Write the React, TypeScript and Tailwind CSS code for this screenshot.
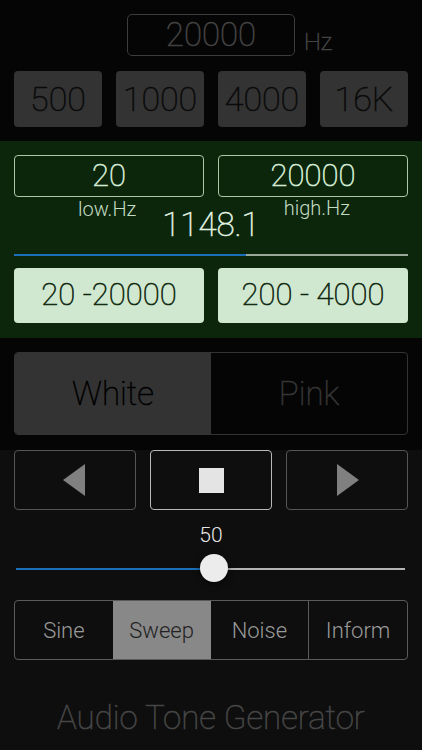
import React from 'react';

const font = { fontFamily: 'Roboto, "Liberation Sans", sans-serif' };

// Roboto Thin is a bit lighter than the light face in the shot, so thicken it a touch
const thin = 'font-thin [-webkit-text-stroke-width:0.6px]';

function Presets() {
  const items = ['500', '1000', '4000', '16K'];
  return (
    <div className="mt-[15px] grid grid-cols-4 gap-[14px] px-[14px]">
      {items.map((t) => (
        <div
          key={t}
          className={`flex h-[56px] items-center justify-center rounded-[4px] bg-[#333333] text-[34px] text-[#0a0a0a] ${thin}`}
        >
          {t}
        </div>
      ))}
    </div>
  );
}

function RangeSection() {
  return (
    <div className="h-[197px] bg-[#0c260c] px-[14px] pt-[14px]">
      <div className="grid grid-cols-2 gap-[14px]">
        <div className={`flex h-[42px] items-center justify-center rounded-[4px] border border-[#a9c9a9] text-[31px] text-[#d8eed8] ${thin}`}>
          20
        </div>
        <div className={`flex h-[42px] items-center justify-center rounded-[4px] border border-[#a9c9a9] text-[31px] text-[#d8eed8] ${thin}`}>
          20000
        </div>
      </div>
      <div className="grid h-[57px] grid-cols-[1fr_auto_1fr] text-[#c4dcc4]">
        <div className="pr-[26px] text-right text-[20px] font-light leading-[24px]">low.Hz</div>
        <div className={`pt-[10px] text-[33px] leading-[36px] text-[#e0f2e0] ${thin}`}>1148.1</div>
        <div className="pl-[24px] text-[20px] font-light leading-[22px]">high.Hz</div>
      </div>
      <div className="flex h-[2px]">
        <div className="w-[232px] bg-[#1b6fb8]" />
        <div className="flex-1 bg-[#9aa89a]" />
      </div>
      <div className="mt-[12px] grid grid-cols-2 gap-[14px]">
        <div className={`flex h-[55px] items-center justify-center rounded-[4px] bg-[#d0e8d0] text-[31px] text-[#0e260e] ${thin}`}>
          20 -20000
        </div>
        <div className={`flex h-[55px] items-center justify-center rounded-[4px] bg-[#d0e8d0] text-[31px] text-[#0e260e] ${thin}`}>
          200 - 4000
        </div>
      </div>
    </div>
  );
}

function NoiseToggle() {
  return (
    <div className="h-[112px] bg-[#050505] px-[14px] pt-[14px]">
      <div className="flex h-[83px] overflow-hidden rounded-[4px] border border-[#333333]">
        <div className={`flex w-[196px] items-center justify-center bg-[#333333] text-[33px] text-[#000000] ${thin}`}>
          White
        </div>
        <div className={`flex flex-1 items-center justify-center text-[33px] text-[#353535] ${thin}`}>
          Pink
        </div>
      </div>
    </div>
  );
}

function Transport() {
  return (
    <div className="grid grid-cols-3 gap-[14px] px-[14px]">
      <div className="flex h-[60px] items-center justify-center rounded-[4px] border border-[#555555]">
        <svg width="24" height="32" viewBox="0 0 24 32">
          <polygon points="22,0 22,32 0,16" fill="#808080" />
        </svg>
      </div>
      <div className="flex h-[60px] items-center justify-center rounded-[4px] border border-[#b8b8b8]">
        <div className="h-[25px] w-[25px] bg-[#e4e4e4]" />
      </div>
      <div className="flex h-[60px] items-center justify-center rounded-[4px] border border-[#555555]">
        <svg width="24" height="32" viewBox="0 0 24 32">
          <polygon points="2,0 2,32 24,16" fill="#808080" />
        </svg>
      </div>
    </div>
  );
}

function Volume() {
  return (
    <div className="px-[16px]">
      <div className="mt-[12px] text-center text-[21px] font-light leading-[26px] text-[#e6e6e6]">50</div>
      <div className="relative mt-[6px] h-[30px]">
        <div className="absolute left-0 right-[1px] top-[14px] flex h-[2px]">
          <div className="w-[198px] bg-[#1b6fb8]" />
          <div className="flex-1 bg-[#b4b4b4]" />
        </div>
        <div className="absolute left-[184px] top-0 h-[28px] w-[28px] rounded-full bg-[#ececec] shadow-[0_2px_6px_rgba(0,0,0,0.6)]" />
      </div>
    </div>
  );
}

function Modes() {
  const items = ['Sine', 'Sweep', 'Noise', 'Inform'];
  return (
    <div className="mx-[14px] mt-[16px] flex h-[60px] overflow-hidden rounded-[4px] border border-[#5a5a5a]">
      {items.map((t, i) => (
        <div
          key={t}
          className={
            'flex flex-1 items-center justify-center text-[22px] font-light ' +
            (t === 'Sweep' ? 'bg-[#888888] text-[#222222] ' : 'text-[#9a9a9a] ') +
            (i === 3 ? 'border-l border-[#5a5a5a]' : '')
          }
        >
          {t}
        </div>
      ))}
    </div>
  );
}

export default function App() {
  return (
    <div className="flex h-[750px] w-[422px] flex-col overflow-hidden bg-[#0e0e0e] antialiased" style={font}>
      <div className="h-[141px] bg-[#050505] pt-[14px]">
        <div className="grid grid-cols-[1fr_168px_1fr] items-end">
          <div />
          <div className={`flex h-[42px] items-center justify-center rounded-[5px] border border-[#3c3c3c] text-[33px] text-[#444444] ${thin}`}>
            20000
          </div>
          <div className={`pl-[9px] text-[24px] leading-[28px] text-[#444444] ${thin}`}>Hz</div>
        </div>
        <Presets />
      </div>
      <RangeSection />
      <NoiseToggle />
      <Transport />
      <Volume />
      <Modes />
      <div className={`mt-[33px] text-center text-[33px] text-[#464646] ${thin}`}>Audio Tone Generator</div>
    </div>
  );
}
